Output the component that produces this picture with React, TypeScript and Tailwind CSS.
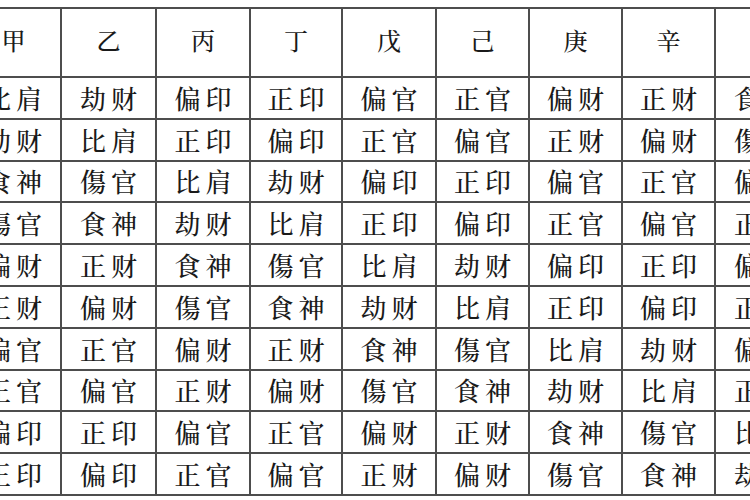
import React from "react";

const stems = ["甲", "乙", "丙", "丁", "戊", "己", "庚", "辛", "壬"];

const rows: string[][] = [
  ["比肩", "劫财", "偏印", "正印", "偏官", "正官", "偏财", "正财", "食神"],
  ["劫财", "比肩", "正印", "偏印", "正官", "偏官", "正财", "偏财", "傷官"],
  ["食神", "傷官", "比肩", "劫财", "偏印", "正印", "偏官", "正官", "偏财"],
  ["傷官", "食神", "劫财", "比肩", "正印", "偏印", "正官", "偏官", "正财"],
  ["偏财", "正财", "食神", "傷官", "比肩", "劫财", "偏印", "正印", "偏官"],
  ["正财", "偏财", "傷官", "食神", "劫财", "比肩", "正印", "偏印", "正官"],
  ["偏官", "正官", "偏财", "正财", "食神", "傷官", "比肩", "劫财", "偏印"],
  ["正官", "偏官", "正财", "偏财", "傷官", "食神", "劫财", "比肩", "正印"],
  ["偏印", "正印", "偏官", "正官", "偏财", "正财", "食神", "傷官", "比肩"],
  ["正印", "偏印", "正官", "偏官", "正财", "偏财", "傷官", "食神", "劫财"],
];

export default function App() {
  return (
    <div className="h-[500px] w-[750px] overflow-hidden bg-white pt-[7px] font-['Noto_Serif_CJK_SC','Noto_Sans_CJK_SC',sans-serif] text-[#1a1a1a]">
      <div className="ml-[-35px] grid w-fit grid-cols-[93px_93px_92px_90px_92px_91px_91px_91px_93px] grid-rows-[67px_repeat(10,39.8px)] gap-[2px] bg-[#4d4d4d] p-[2px]">
        {stems.map((s) => (
          <div key={s} className="flex items-center justify-center bg-white pb-[6px] text-[24px] font-medium leading-none">
            {s}
          </div>
        ))}
        {rows.map((row, i) =>
          row.map((cell, j) => (
            <div key={`${i}-${j}`} className="flex items-center justify-center bg-white pl-[5px] text-[26px] font-medium leading-none tracking-[5px] whitespace-nowrap">
              {cell}
            </div>
          ))
        )}
      </div>
    </div>
  );
}
